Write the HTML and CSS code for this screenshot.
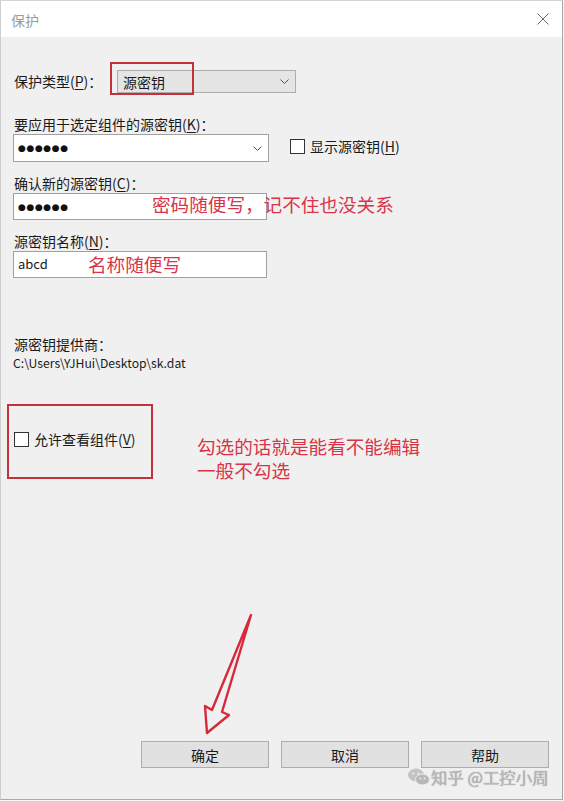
FILE: index.html
```html
<!DOCTYPE html>
<html lang="zh-CN">
<head>
  <meta charset="UTF-8" />
  <meta name="viewport" content="width=device-width, initial-scale=1.0"/>
  <title>保护</title>
  <link rel="stylesheet" href="styles.css">
</head>
<body>

  <div class="window">
    <div class="titlebar">
      <span class="title">保护</span>
      <svg class="close-icon" width="12" height="12" viewBox="0 0 12 12">
        <path d="M0.5 0.5 L11.5 11.5 M11.5 0.5 L0.5 11.5" stroke="#6a6a6a" stroke-width="1" fill="none"/>
      </svg>
    </div>

    <div class="content">
      <div class="type-row">
        <label class="type-label">保护类型(<u>P</u>)：</label>
        <div class="combo combo-flat">
          <span>源密钥</span>
          <svg class="chevron" width="9" height="5" viewBox="0 0 9 5"><path d="M0.5 0.5 L4.5 4.5 L8.5 0.5" stroke="#555" fill="none"/></svg>
        </div>
      </div>

      <label class="field-label first">要应用于选定组件的源密钥(<u>K</u>)：</label>
      <div class="key-row">
        <div class="combo combo-key">
          <span class="dots">●●●●●●</span>
          <svg class="chevron" width="9" height="5" viewBox="0 0 9 5"><path d="M0.5 0.5 L4.5 4.5 L8.5 0.5" stroke="#555" fill="none"/></svg>
        </div>
        <div class="check show-key">
          <span class="box"></span>
          <span>显示源密钥(<u>H</u>)</span>
        </div>
      </div>

      <label class="field-label">确认新的源密钥(<u>C</u>)：</label>
      <div class="textbox"><span class="dots">●●●●●●</span></div>

      <label class="field-label">源密钥名称(<u>N</u>)：</label>
      <div class="textbox"><span class="plain">abcd</span></div>

      <div class="provider-label">源密钥提供商：</div>
      <div class="provider-path">C:\Users\YJHui\Desktop\sk.dat</div>

      <div class="check view-check">
        <span class="box"></span>
        <span>允许查看组件(<u>V</u>)</span>
      </div>

      <div class="button-row">
        <button class="btn">确定</button>
        <button class="btn">取消</button>
        <button class="btn">帮助</button>
      </div>
    </div>
  </div>

  <!-- annotations drawn over the dialog -->
  <div class="mark mark-type"></div>
  <div class="mark mark-view"></div>
  <div class="note note-pass">密码随便写，记不住也没关系</div>
  <div class="note note-name">名称随便写</div>
  <div class="note note-view">勾选的话就是能看不能编辑<br>一般不勾选</div>

  <svg class="arrow" width="564" height="801" viewBox="0 0 564 801">
    <polygon points="251,615 222,712 229,715 207,733 205,706 212,710" fill="none" stroke="#d9283a" stroke-width="2.4" stroke-linejoin="round"/>
  </svg>

  <div class="watermark">
    <svg width="22" height="18" viewBox="0 0 22 18">
      <ellipse cx="8" cy="7" rx="8" ry="6.5" fill="#c4c4c4"/>
      <ellipse cx="14.5" cy="11.5" rx="7" ry="5.5" fill="#b8b8b8" stroke="#f0f0f0" stroke-width="1"/>
      <circle cx="5.3" cy="5.5" r="1" fill="#f0f0f0"/>
      <circle cx="10.3" cy="5.5" r="1" fill="#f0f0f0"/>
      <circle cx="12.3" cy="10.5" r="0.9" fill="#f0f0f0"/>
      <circle cx="16.5" cy="10.5" r="0.9" fill="#f0f0f0"/>
    </svg>
    <span>知乎 @工控小周</span>
  </div>

</body>
</html>
```

FILE: styles.css
```css
body {
  margin: 0;
  background: #f4f4f4;
  font-family: "Noto Sans CJK SC", sans-serif;
  color: #1a1a1a;
  position: relative;
  width: 564px;
  height: 801px;
  overflow: hidden;
}

.window {
  width: 563px;
  height: 800px;
  box-sizing: border-box;
  border: 1px solid #a8a8a8;
  border-top-color: #d4d4d4;
  border-left-color: #cfcfcf;
  display: flex;
  flex-direction: column;
  background: #f0f0f0;
}

.titlebar {
  height: 36px;
  background: #ffffff;
  display: flex;
  align-items: center;
  justify-content: space-between;
  padding: 0 13px 0 10px;
  flex-shrink: 0;
}

.title {
  font-size: 14px;
  color: #9a9a9a;
  margin-top: 2px;
}

.content {
  flex: 1;
  display: flex;
  flex-direction: column;
  padding: 0 13px 31px 12px;
  font-size: 14px;
}

u {
  text-decoration: underline;
  text-underline-offset: 2px;
}

.type-row {
  display: flex;
  align-items: center;
  margin-top: 33px;
}

.type-label {
  width: 103px;
  padding-left: 1px;
  line-height: 19px;
}

.combo {
  display: flex;
  align-items: center;
  justify-content: space-between;
  box-sizing: border-box;
  border: 1px solid #adadad;
}

.combo-flat {
  width: 179px;
  height: 23px;
  background: #e5e5e5;
  padding: 0 6px 0 5px;
}

.combo-key {
  width: 256px;
  height: 28px;
  background: #ffffff;
  border-color: #a0a0a0;
  padding: 0 6px 0 4px;
}

.chevron {
  display: block;
}

.field-label {
  display: block;
  padding-left: 1px;
  line-height: 19px;
  margin-top: 12px;
}

.field-label.first {
  margin-top: 22px;
}

.key-row {
  display: flex;
  align-items: center;
}

.check {
  display: flex;
  align-items: center;
  gap: 5px;
  line-height: 20px;
}

.box {
  width: 13px;
  height: 13px;
  border: 1px solid #333;
  background: #ffffff;
  display: block;
}

.show-key {
  margin-left: 21px;
  margin-top: -4px;
}

.textbox {
  width: 254px;
  height: 27px;
  box-sizing: border-box;
  border: 1px solid #a0a0a0;
  background: #ffffff;
  display: flex;
  align-items: center;
  padding-left: 4px;
}

.dots {
  font-family: "DejaVu Sans", sans-serif;
  font-size: 9px;
  letter-spacing: 0.6px;
  color: #111;
}

.plain {
  font-size: 13px;
  margin-top: -2px;
}

.provider-label {
  margin-top: 56px;
  padding-left: 1px;
  line-height: 20px;
}

.provider-path {
  font-size: 12.2px;
  line-height: 16px;
  margin-top: 1px;
}

.view-check {
  margin-top: 58px;
  padding-left: 1px;
}

.button-row {
  margin-top: auto;
  display: flex;
  justify-content: flex-end;
  gap: 12px;
}

.btn {
  width: 128px;
  height: 27px;
  background: #e1e1e1;
  border: 1px solid #adadad;
  font-family: "Noto Sans CJK SC", sans-serif;
  font-size: 14px;
  color: #1a1a1a;
  padding: 0;
}

/* annotations */
.mark {
  position: absolute;
  border: 2px solid #c5303d;
  box-sizing: border-box;
}

.mark-type {
  left: 110px;
  top: 62px;
  width: 84px;
  height: 33px;
}

.mark-view {
  left: 7px;
  top: 404px;
  width: 146px;
  height: 75px;
}

.note {
  position: absolute;
  color: #d83449;
  font-size: 18.6px;
  line-height: 24px;
  white-space: nowrap;
}

.note-pass {
  left: 152px;
  top: 192px;
}

.note-name {
  left: 88px;
  top: 252px;
}

.note-view {
  left: 197px;
  top: 434px;
}

.arrow {
  position: absolute;
  left: 0;
  top: 0;
  pointer-events: none;
}

.watermark {
  position: absolute;
  left: 408px;
  top: 766px;
  display: flex;
  align-items: center;
  gap: 1px;
  color: #b9b9b9;
  font-size: 16.4px;
  line-height: 22px;
  text-shadow: 0 0 1px #888;
}
```
